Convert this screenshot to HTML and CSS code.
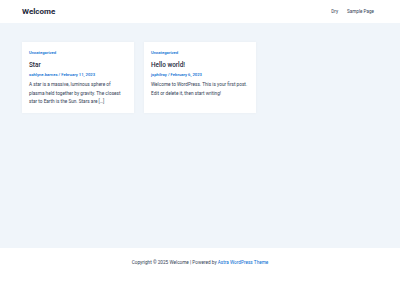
FILE: index.html
```html
<!DOCTYPE html>
<html lang="en">
<head>
  <meta charset="UTF-8">
  <title>Welcome</title>
  <link rel="stylesheet" href="styles.css">
</head>
<body>
  <header class="site-header">
    <a class="site-title" href="#">Welcome</a>
    <nav class="main-nav">
      <a href="#">Dry</a>
      <a href="#">Sample Page</a>
    </nav>
  </header>
  <main class="site-main">
    <div class="posts">
      <article class="post-card">
        <a class="post-cat" href="#">Uncategorized</a>
        <h2 class="post-title">Star</h2>
        <div class="post-meta"><a href="#">sohlyne.barnes</a> / February 11, 2023</div>
        <p class="post-excerpt">A star is a massive, luminous sphere of plasma held together by gravity. The closest star to Earth is the Sun. Stars are […]</p>
      </article>
      <article class="post-card">
        <a class="post-cat" href="#">Uncategorized</a>
        <h2 class="post-title">Hello world!</h2>
        <div class="post-meta"><a href="#">jsphilroy</a> / February 6, 2023</div>
        <p class="post-excerpt">Welcome to WordPress. This is your first post. Edit or delete it, then start writing!</p>
      </article>
    </div>
  </main>
  <footer class="site-footer">
    <p>Copyright © 2025 Welcome | Powered by <a href="#">Astra WordPress Theme</a></p>
  </footer>
</body>
</html>
```

FILE: styles.css
```css
:root {
  --link-color: #046bd2;
  --heading-color: #1e293b;
  --text-color: #334155;
  --main-bg: #f0f5fa;
}
* {
  box-sizing: border-box;
  margin: 0;
  padding: 0;
}
body {
  font-family: Roboto, "Liberation Sans", sans-serif;
  color: var(--text-color);
  background: #fff;
  width: 400px;
  height: 300px;
  display: flex;
  flex-direction: column;
}
a {
  text-decoration: none;
  color: inherit;
}
.site-header {
  height: 23px;
  padding: 0 26px 0 22px;
  display: flex;
  justify-content: space-between;
  align-items: center;
  background: #fff;
}
.site-title {
  font-size: 8px;
  font-weight: 700;
  color: var(--heading-color);
}
.main-nav {
  display: flex;
  gap: 9px;
  font-size: 4.6px;
  color: var(--text-color);
}
.site-main {
  height: 225px;
  background: var(--main-bg);
  padding: 19px 22px;
}
.posts {
  display: grid;
  grid-template-columns: 112px 112px;
  gap: 10px;
}
.post-card {
  background: #fff;
  height: 71px;
  padding: 8px 7px 7px;
  box-shadow: 0 0 3px rgba(15, 23, 42, 0.04);
}
.post-cat {
  display: block;
  font-size: 4.2px;
  line-height: 6px;
  font-weight: 500;
  color: var(--link-color);
}
.post-title {
  margin-top: 5px;
  font-size: 6.4px;
  line-height: 8px;
  font-weight: 500;
  color: var(--heading-color);
}
.post-meta {
  margin-top: 3px;
  font-size: 4.2px;
  line-height: 6px;
  font-weight: 500;
  color: var(--link-color);
}
.post-excerpt {
  margin-top: 3.4px;
  font-size: 4.72px;
  line-height: 8.3px;
  color: var(--text-color);
}
.site-footer {
  flex: 1;
  background: #fff;
  padding-top: 12px;
  text-align: center;
  font-size: 4.7px;
  line-height: 6px;
  color: var(--text-color);
}
.site-footer a {
  color: var(--link-color);
}
```
